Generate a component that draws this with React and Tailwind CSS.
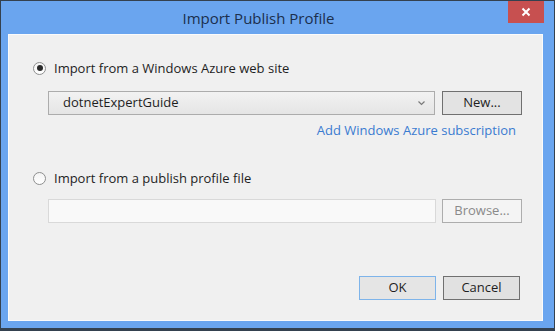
import React, { useState } from "react";

const font = { fontFamily: '"Open Sans", "Noto Sans", "Liberation Sans", sans-serif' };

function Radio({ checked, onClick, label }) {
  return (
    <button onClick={onClick} className="flex items-center h-[16px] text-left">
      <span className="w-[13px] h-[13px] rounded-full border border-[#8e8f8f] bg-gradient-to-b from-[#f4f4f4] to-[#ffffff] flex items-center justify-center">
        {checked && <span className="w-[6px] h-[6px] rounded-full bg-[#2a2a2a]" />}
      </span>
      <span className="ml-[8px] text-[13px] leading-[16px] text-[#1e1e1e]">{label}</span>
    </button>
  );
}

export default function App() {
  const [source, setSource] = useState("azure");

  return (
    <div
      className="w-[555px] h-[331px] bg-[#6aa5ef] border border-[#34414f] border-b-[3px] flex flex-col select-none"
      style={font}
    >
      {/* Title bar */}
      <div className="h-[33px] flex items-start">
        <div className="flex-1 h-[33px] flex items-center justify-center pt-[2px] pl-[8px]">
          <span className="text-[15px] text-[#1b2f4d]">Import Publish Profile</span>
        </div>
        <button className="w-[36px] h-[22px] mr-[10px] bg-[#c75050] flex items-center justify-center">
          <svg width="10" height="10" viewBox="0 0 10 10">
            <path d="M1.5 1.5 L8.5 8.5 M8.5 1.5 L1.5 8.5" stroke="#ffffff" strokeWidth="2" />
          </svg>
        </button>
      </div>

      {/* Client area */}
      <div className="ml-[7px] mr-[11px] mb-[7px] flex-1 bg-[#f0f0f0] border border-[#fbfbfb] flex flex-col pl-[24px] pr-[19px] pt-[25px] pb-[20px]">
        <Radio
          checked={source === "azure"}
          onClick={() => setSource("azure")}
          label="Import from a Windows Azure web site"
        />
        <div className="flex ml-[15px] mt-[15px] gap-[7px]">
          <div className="w-[387px] h-[24px] border border-[#acacac] bg-gradient-to-b from-[#f2f2f2] to-[#e5e5e5] flex items-center justify-between pl-[14px] pr-[9px]">
            <span className="text-[13px] text-[#1e1e1e]">dotnetExpertGuide</span>
            <svg width="7" height="5" viewBox="0 0 7 5">
              <path d="M0.5 0.5 L3.5 3.5 L6.5 0.5" fill="none" stroke="#7a7a7a" strokeWidth="1.2" />
            </svg>
          </div>
          <button className="w-[80px] h-[24px] border border-[#707070] bg-[#e3e3e3] text-[13px] text-[#1e1e1e]">
            New...
          </button>
        </div>
        <div className="flex justify-end mt-[7px] pr-[7px]">
          <a className="text-[13px] leading-[16px] text-[#3a7bd0] cursor-pointer">
            Add Windows Azure subscription
          </a>
        </div>

        <div className="mt-[32px]">
          <Radio
            checked={source === "file"}
            onClick={() => setSource("file")}
            label="Import from a publish profile file"
          />
        </div>
        <div className="flex ml-[15px] mt-[13px] gap-[6px]">
          <div className="w-[388px] h-[24px] border border-[#d9d9d9] bg-[#f9f9f9]" />
          <button className="w-[80px] h-[24px] border border-[#adadad] bg-[#f4f4f4] text-[13px] text-[#8a8a8a]">
            Browse...
          </button>
        </div>

        <div className="mt-auto flex justify-end gap-[7px] pr-[3px]">
          <button className="w-[77px] h-[24px] border border-[#7eb4ea] bg-[#e5e5e5] text-[13px] text-[#1e1e1e]">
            OK
          </button>
          <button className="w-[77px] h-[24px] border border-[#707070] bg-[#e1e1e1] text-[13px] text-[#1e1e1e]">
            Cancel
          </button>
        </div>
      </div>
    </div>
  );
}
